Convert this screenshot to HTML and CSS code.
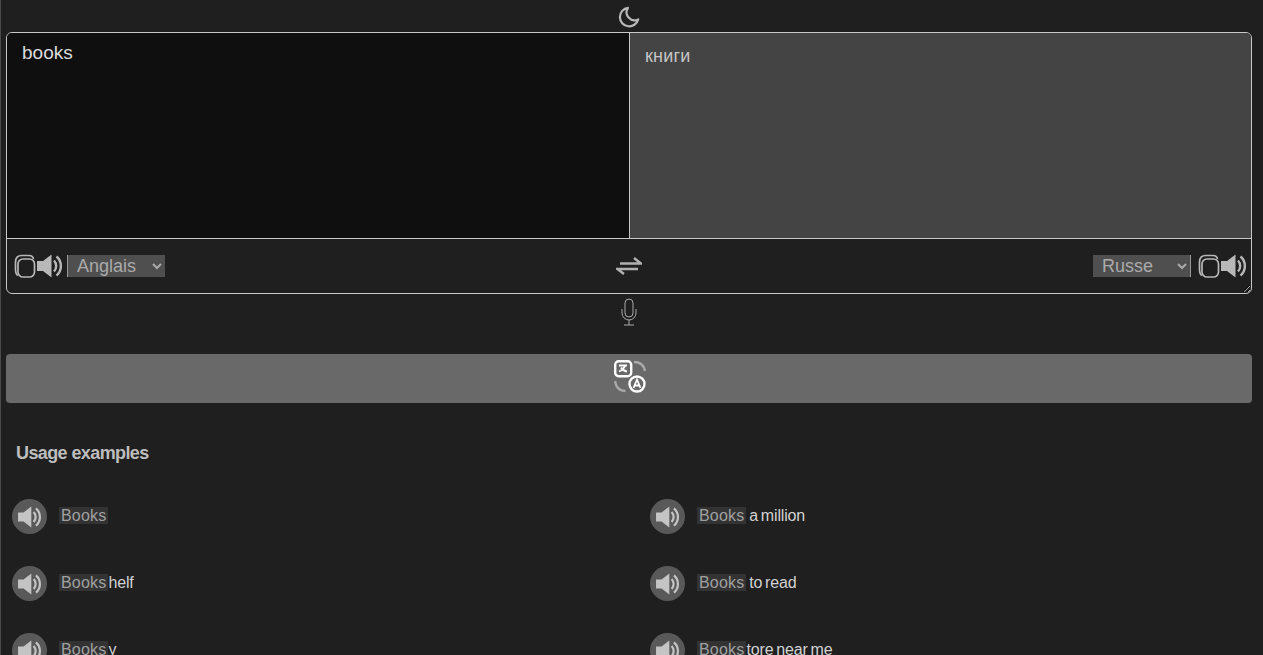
FILE: index.html
```html
<!DOCTYPE html>
<html lang="en">
<head>
<meta charset="utf-8">
<title>Translator</title>
<link rel="stylesheet" href="styles.css">
</head>
<body>
<svg class="defs" width="0" height="0" aria-hidden="true">
  <symbol id="speaker" viewBox="0 0 27 24">
    <path d="M1 7h6L15.500 .5v23L7 17H1z" fill="currentColor"/>
    <path d="M18 6.500a8 8 0 0 1 0 11" fill="none" stroke="currentColor" stroke-width="2.400"/>
    <path d="M20.500 2.500a12.500 12.500 0 0 1 0 19" fill="none" stroke="currentColor" stroke-width="2.400"/>
  </symbol>
  <symbol id="copy" viewBox="0 0 22 24">
    <rect x="4" y="5" width="16.500" height="18" rx="5" fill="none" stroke="currentColor" stroke-width="1.700"/>
    <path d="M4 21.500C2 20.500 1.500 18 1.500 15V8C1.500 3.500 4 1.500 8 1.500h7c2.500 0 4 1 4.500 3.500" fill="none" stroke="currentColor" stroke-width="1.700"/>
  </symbol>
</svg>
<header class="top">
  <svg class="moon" width="22" height="22" viewBox="0 0 22 22"><path d="M10 1.800a9.300 9.300 0 1 0 10.200 11.600A8 8 0 0 1 10 1.800z" fill="none" stroke="currentColor" stroke-width="2.200" stroke-linejoin="round"/></svg>
</header>
<main class="panel">
  <div class="texts">
    <textarea class="source" spellcheck="false">books</textarea>
    <div class="target">книги</div>
  </div>
  <div class="toolbar">
    <div class="tools">
      <svg class="copy" width="22" height="24"><use href="#copy"/></svg>
      <svg class="speak" width="27" height="24"><use href="#speaker"/></svg>
      <select class="lang lang-left"><option>Anglais</option></select>
    </div>
    <svg class="swap" width="26" height="18" viewBox="0 0 26 18"><path d="M4 6.500h21l-7-5.500M22 12H1.500l6.500 5" fill="none" stroke="currentColor" stroke-width="2.500"/></svg>
    <div class="tools">
      <select class="lang lang-right"><option>Russe</option></select>
      <svg class="copy" width="22" height="24"><use href="#copy"/></svg>
      <svg class="speak" width="27" height="24"><use href="#speaker"/></svg>
    </div>
  </div>
</main>
<div class="mic-row">
  <svg width="16" height="28" viewBox="0 0 16 28"><rect x="4" y="1" width="8" height="18" rx="4" fill="none" stroke="currentColor"/><path d="M1 11v4a7 7 0 0 0 14 0v-4M8 22v5M3 27h10" fill="none" stroke="currentColor"/></svg>
</div>
<button class="translate" type="button" aria-label="Translate">
  <svg width="32" height="33" viewBox="0 0 32 33">
    <rect x="1.200" y="1.200" width="16" height="15" rx="3.500" fill="none" stroke="#fff" stroke-width="2.400"/>
    <path d="M5 5.500h8M11 5.500c-1 3-3 5-6 6M7 7.500c1 2 3 3.500 6 4" fill="none" stroke="#fff" stroke-width="1.800"/>
    <circle cx="23" cy="24" r="7.500" fill="none" stroke="#fff" stroke-width="2.400"/>
    <path d="M19.500 28 23 19.500 26.500 28M20.500 25.500h5" fill="none" stroke="#fff" stroke-width="1.800"/>
    <path d="M20 2c6 0 10 3.500 11 9M11.500 31C6 31 2 27.500 1 21" fill="none" stroke="#a8a8a8" stroke-width="2.400"/>
  </svg>
</button>
<h2 class="heading">Usage examples</h2>
<section class="examples">
  <div class="example"><span class="play"><svg width="25" height="22"><use href="#speaker"/></svg></span><p><mark>Books</mark></p></div>
  <div class="example"><span class="play"><svg width="25" height="22"><use href="#speaker"/></svg></span><p><mark>Books</mark> a million</p></div>
  <div class="example"><span class="play"><svg width="25" height="22"><use href="#speaker"/></svg></span><p><mark>Books</mark>helf</p></div>
  <div class="example"><span class="play"><svg width="25" height="22"><use href="#speaker"/></svg></span><p><mark>Books</mark> to read</p></div>
  <div class="example"><span class="play"><svg width="25" height="22"><use href="#speaker"/></svg></span><p><mark>Books</mark>y</p></div>
  <div class="example"><span class="play"><svg width="25" height="22"><use href="#speaker"/></svg></span><p><mark>Books</mark>tore near me</p></div>
</section>
</body>
</html>
```
FILE: styles.css
```css
* { box-sizing: border-box; }
html { overflow: hidden; height: 100%; }
body {
  margin: 0;
  padding: 0 11px 0 5px;
  height: 100%;
  background: #1f1f1f;
  color: #b8b8b8;
  font-family: "Liberation Sans", Arial, sans-serif;
  border-left: 1px solid #4a4a4a;
}
.defs { position: absolute; }
.top { height: 32px; display: flex; justify-content: center; padding-top: 6px; }
.panel {
  width: 1246px;
  height: 262px;
  border: 1px solid #c8c8c8;
  border-radius: 6px;
  display: flex;
  flex-direction: column;
  overflow: hidden;
  resize: both;
}
.texts { display: flex; height: 206px; border-bottom: 1px solid #c8c8c8; flex: none; }
.source {
  width: 623px;
  height: 100%;
  background: #0f0f0f;
  color: #dcdcdc;
  border: 0;
  border-right: 1px solid #c8c8c8;
  outline: 0;
  resize: none;
  padding: 9px 15px;
  font: 19px/22px "Liberation Sans", Arial, sans-serif;
}
.target {
  flex: 1;
  background: #444;
  color: #c4c4c4;
  padding: 14px 16px 14px 15px;
  font-size: 18px;
  line-height: 19px;
  letter-spacing: 0.2px;
}
.toolbar {
  flex: 1;
  display: flex;
  align-items: center;
  justify-content: space-between;
  padding: 0 4px 0 7px;
}
.tools { display: flex; align-items: center; }
.copy, .speak { color: #b8b8b8; }
.swap { color: #b0b0b0; }
.lang {
  width: 98px;
  height: 22px;
  background-color: #4f4f4f;
  color: #aaa;
  border: 0;
  border-radius: 0;
  font: 18px "Liberation Sans", Arial, sans-serif;
  padding: 0 0 0 5px;
  outline: 0;
}
.lang-left { border-left: 1px solid #999; margin-left: 4px; }
.lang-right { border-right: 1px solid #999; margin-right: 7px; }
.mic-row { height: 60px; display: flex; justify-content: center; padding-top: 4px; color: #aaa; }
.translate {
  display: flex;
  justify-content: center;
  width: 1246px;
  height: 49px;
  background: #696969;
  border: 0;
  border-radius: 4px;
  padding: 6px 0 0 1px;
}
.heading {
  margin: 0;
  padding: 40px 0 0 10px;
  font-size: 18px;
  line-height: 20px;
  font-weight: 700;
  letter-spacing: -0.6px;
  color: #bdbdbd;
}
.examples {
  display: grid;
  grid-template-columns: 638px 1fr;
  grid-auto-rows: 67px;
  padding: 36px 0 0 6px;
}
.example { display: flex; align-items: flex-start; gap: 12px; }
.play {
  width: 35px;
  height: 35px;
  border-radius: 50%;
  background: #595959;
  color: #c4c4c4;
  display: flex;
  align-items: center;
  justify-content: center;
  flex: none;
}
.example p {
  margin: 0;
  font-size: 16px;
  line-height: 18px;
  padding-top: 8px;
  color: #d2d2d2;
  letter-spacing: -0.15px;
  word-spacing: -1.5px;
}
mark {
  background: #333;
  color: #a0a0a0;
  padding: 0 2px;
  letter-spacing: 0.2px;
}
```
